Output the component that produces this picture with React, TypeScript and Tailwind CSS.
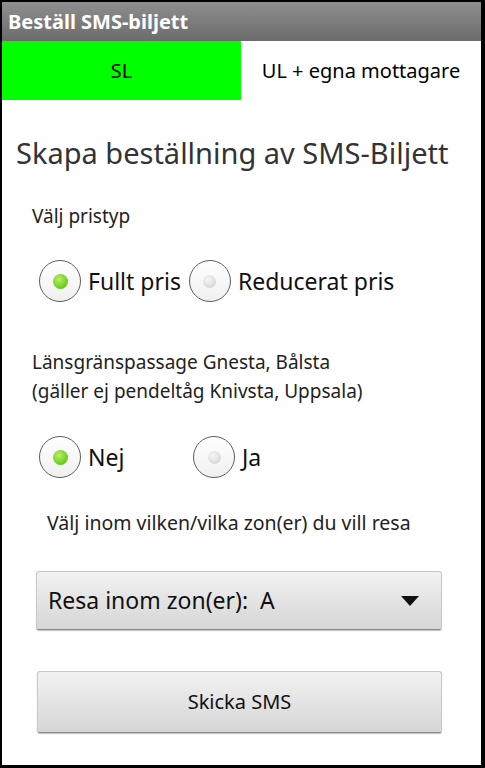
import React from 'react';

const font = { fontFamily: '"Noto Sans", "Open Sans", sans-serif' };

function Radio({ checked, label }: { checked: boolean; label: string }) {
  return (
    <div className="flex items-center">
      <div className="w-[42px] h-[42px] rounded-full border-[1.5px] border-[#5e5e5e] bg-gradient-to-b from-white to-[#f0f0f0] flex items-center justify-center">
        {checked ? (
          <div className="w-[15px] h-[15px] rounded-full bg-[radial-gradient(circle_at_40%_35%,#b8f06a,#79d22c_55%,#56a81a)]" />
        ) : (
          <div className="w-[13px] h-[13px] rounded-full bg-[radial-gradient(circle_at_40%_35%,#f6f6f6,#dedede_60%,#c6c6c6)]" />
        )}
      </div>
      <span className="ml-[7px] text-[23px] text-[#111] leading-none">{label}</span>
    </div>
  );
}

export default function App() {
  return (
    <div className="w-[485px] h-[768px] bg-black pt-[2px] pl-[2px]" style={font}>
      <div className="w-[479px] h-[763px] bg-white flex flex-col">
        {/* Title bar */}
        <div className="h-[39px] bg-gradient-to-b from-[#8e8e8e] to-[#6c6c6c] flex items-center px-[6px]">
          <span className="text-white font-bold text-[20px]">Beställ SMS-biljett</span>
        </div>

        {/* Tabs */}
        <div className="flex h-[59px]">
          <div className="w-[239px] bg-[#00ff00] flex items-center justify-center text-[20px] text-black">SL</div>
          <div className="flex-1 flex items-center justify-center text-[20px] text-black">UL + egna mottagare</div>
        </div>

        {/* Content */}
        <div className="flex flex-col">
          <h1 className="mt-[33px] ml-[14px] h-[40px] leading-[40px] text-[29px] text-[#333]">Skapa beställning av SMS-Biljett</h1>

          <p className="mt-[30px] ml-[30px] h-[26px] leading-[26px] text-[19px] text-[#222]">Välj pristyp</p>

          <div className="mt-[31px] ml-[37px] flex items-center gap-[8px]">
            <Radio checked label="Fullt pris" />
            <Radio checked={false} label="Reducerat pris" />
          </div>

          <div className="mt-[46px] ml-[30px] text-[19px] leading-[29px] text-[#222]">
            <div>Länsgränspassage Gnesta, Bålsta</div>
            <div>(gäller ej pendeltåg Knivsta, Uppsala)</div>
          </div>

          <div className="mt-[30px] ml-[37px] flex items-center">
            <div className="w-[154px]"><Radio checked label="Nej" /></div>
            <Radio checked={false} label="Ja" />
          </div>

          <p className="mt-[32px] ml-[45px] h-[26px] leading-[26px] text-[19.5px] text-[#222]">Välj inom vilken/vilka zon(er) du vill resa</p>

          <div className="mt-[35px] ml-[34px] w-[406px] h-[59px] rounded-[3px] border border-[#c8c8c8] border-b-[#8a8a8a] bg-gradient-to-b from-[#f2f2f2] to-[#d6d6d6] shadow-[0_1px_1px_rgba(0,0,0,0.25)] flex items-center justify-between pl-[11px] pr-[22px]">
            <span className="text-[23px] text-[#111]">Resa inom zon(er):&nbsp; A</span>
            <svg width="18" height="10" viewBox="0 0 18 10"><path d="M0 0h18L9 10z" fill="#111" /></svg>
          </div>

          <div className="mt-[41px] ml-[35px] w-[405px] h-[62px] rounded-[3px] border border-[#c8c8c8] border-b-[#8a8a8a] bg-gradient-to-b from-[#f2f2f2] to-[#d6d6d6] shadow-[0_1px_1px_rgba(0,0,0,0.25)] flex items-center justify-center">
            <span className="text-[20px] text-[#111]">Skicka SMS</span>
          </div>
        </div>
      </div>
    </div>
  );
}
